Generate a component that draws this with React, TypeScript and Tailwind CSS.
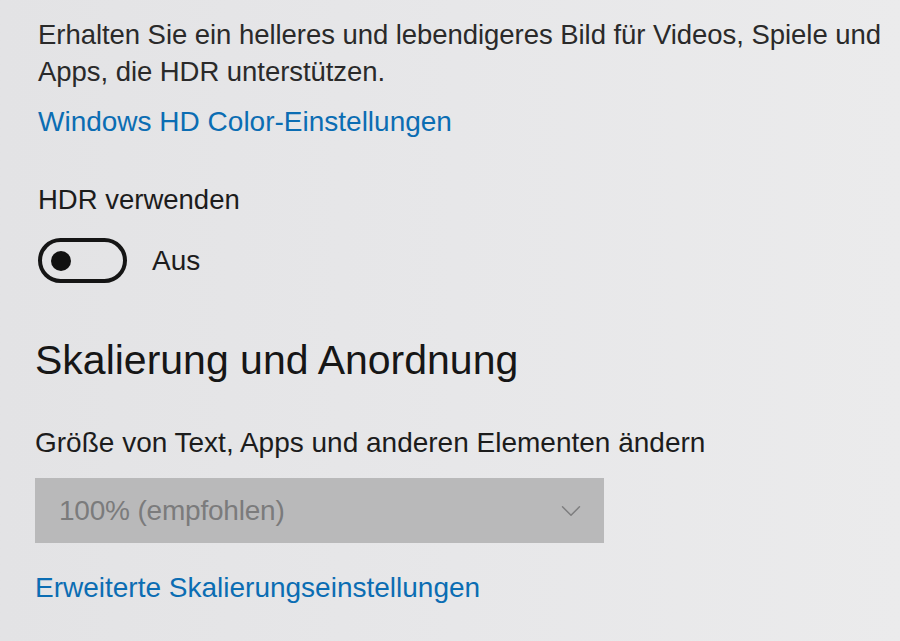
import { ChevronDown } from 'lucide-react';

const font = { fontFamily: '"Liberation Sans", Arial, sans-serif' };

export default function App() {
  return (
    <div
      className="w-[900px] h-[641px] overflow-hidden bg-gradient-to-r from-[#e3e3e5] via-[#e7e7e9] to-[#ebebec] text-[#1f1f1f]"
      style={font}
    >
      <div className="pt-[16px] pl-[38px]">
        {/* HDR */}
        <p className="text-[27.5px] leading-[37px] tracking-[-0.05px] text-[#2a2a2a] w-[862px]">
          Erhalten Sie ein helleres und lebendigeres Bild für Videos, Spiele und Apps, die HDR unterstützen.
        </p>
        <a className="block mt-[14px] text-[28px] leading-[36px] text-[#0b6db3]">Windows HD Color-Einstellungen</a>

        <div className="mt-[42px] text-[27.5px] leading-[36px] text-[#1c1c1c]">HDR verwenden</div>
        <div className="mt-[20px] flex items-center gap-[25px]">
          <div className="w-[89px] h-[45px] rounded-full border-[4px] border-[#151515] flex items-center pl-[9px]">
            <div className="w-[20px] h-[20px] rounded-full bg-[#111]" />
          </div>
          <span className="text-[28px] leading-[36px] text-[#1c1c1c]">Aus</span>
        </div>
      </div>

      {/* Skalierung */}
      <div className="pl-[35px]">
        <h2 className="mt-[53px] text-[41px] leading-[48px] text-[#161616]">Skalierung und Anordnung</h2>
        <div className="mt-[41px] text-[28px] leading-[36px] text-[#1c1c1c]">
          Größe von Text, Apps und anderen Elementen ändern
        </div>
        <div className="mt-[17px] w-[569px] h-[65px] bg-[#b9b9ba] flex items-center justify-between pl-[24px] pr-[16px]">
          <span className="text-[28px] tracking-[-0.2px] text-[#7b7b7c]">100% (empfohlen)</span>
          <ChevronDown className="w-[34px] h-[34px] text-[#7d7d7e]" strokeWidth={1} />
        </div>
        <a className="block mt-[27px] text-[28px] leading-[36px] text-[#0b6db3]">
          Erweiterte Skalierungseinstellungen
        </a>
      </div>
    </div>
  );
}
